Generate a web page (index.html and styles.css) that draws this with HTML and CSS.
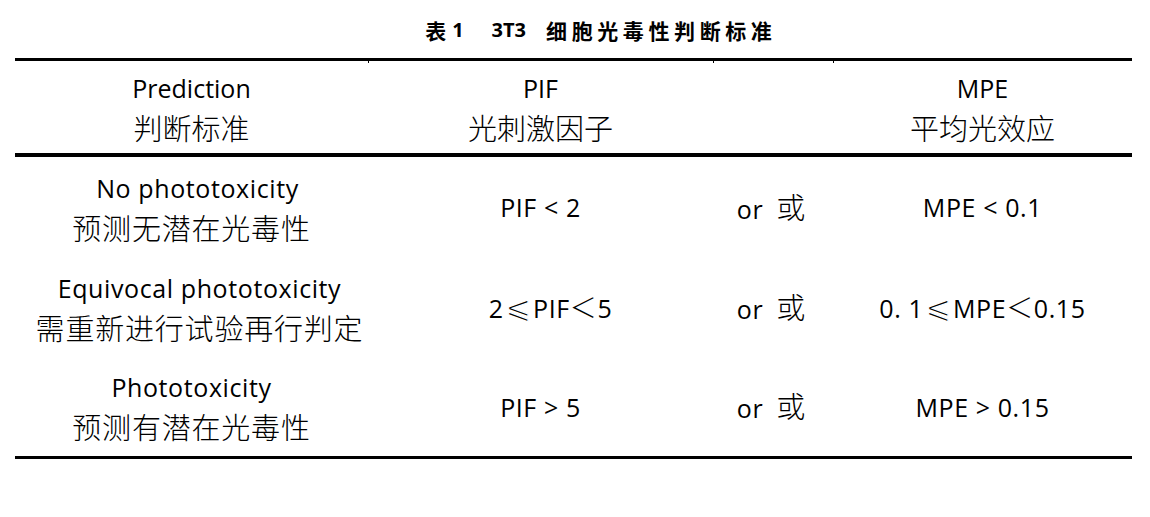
FILE: index.html
```html
<!DOCTYPE html>
<html lang="zh-CN">
<head>
<meta charset="utf-8">
<title>表1 3T3 细胞光毒性判断标准</title>
<link rel="stylesheet" href="styles.css">
</head>
<body>
<div class="page">
  <h1 class="caption"><span class="cap-no">表</span><span class="cap-num">1</span><span class="cap-code">3T3</span><span class="cap-text">细胞光毒性判断标准</span></h1>
  <table class="criteria">
    <colgroup>
      <col class="c1"><col class="c2"><col class="c3"><col class="c4">
    </colgroup>
    <thead>
      <tr>
        <th><span class="en">Prediction</span><span class="zh">判断标准</span></th>
        <th><span class="en">PIF</span><span class="zh">光刺激因子</span></th>
        <th></th>
        <th><span class="en">MPE</span><span class="zh">平均光效应</span></th>
      </tr>
    </thead>
    <tbody>
      <tr>
        <td><span class="en en-right">No phototoxicity</span><span class="zh">预测无潜在光毒性</span></td>
        <td><span class="en">PIF &lt; 2</span></td>
        <td class="or"><span class="en">or</span><span class="zh-or">或</span></td>
        <td><span class="en">MPE &lt; 0.1</span></td>
      </tr>
      <tr>
        <td class="nudge"><span class="en">Equivocal phototoxicity</span><span class="zh">需重新进行试验再行判定</span></td>
        <td class="shift"><span class="en">2<span class="sym">⩽</span>PIF<span class="sym-w">＜</span>5</span></td>
        <td class="or"><span class="en">or</span><span class="zh-or">或</span></td>
        <td><span class="en">0. 1<span class="sym">⩽</span>MPE<span class="sym-w">＜</span>0.15</span></td>
      </tr>
      <tr>
        <td><span class="en">Phototoxicity</span><span class="zh">预测有潜在光毒性</span></td>
        <td><span class="en">PIF &gt; 5</span></td>
        <td class="or"><span class="en">or</span><span class="zh-or">或</span></td>
        <td><span class="en">MPE &gt; 0.15</span></td>
      </tr>
    </tbody>
  </table>
</div>
</body>
</html>
```
FILE: styles.css
```css
html, body {
  margin: 0;
  padding: 0;
  background: #fff;
  color: #000;
}
.page {
  padding: 0 18px 0 15px;
  width: 1117px;
}
.caption {
  margin: 0;
  height: 58px;
  display: flex;
  align-items: center;
  justify-content: center;
  padding: 2px 0 0 50px;
  box-sizing: border-box;
  font-family: "Noto Sans CJK SC", sans-serif;
  font-weight: 700;
  font-size: 21px;
  line-height: 1;
}
.cap-no {
  margin-right: 6px;
}
.cap-num {
  font-family: "Open Sans", sans-serif;
  font-size: 20px;
  margin-right: 28px;
}
.cap-code {
  font-family: "Open Sans", sans-serif;
  font-size: 20px;
  margin-right: 20px;
}
.cap-text {
  letter-spacing: 4.6px;
  margin-right: -4.6px;
}
.criteria {
  width: 1117px;
  border-collapse: collapse;
  table-layout: fixed;
  font-family: "Open Sans", sans-serif;
  font-size: 25px;
}
.c1 { width: 353px; }
.c2 { width: 345px; }
.c3 { width: 120px; }
.c4 { width: 299px; }
.criteria thead tr {
  border-top: 3px solid #000;
  border-bottom: 4px solid #000;
}
.criteria th {
  height: 92px;
  padding: 0;
  font-weight: 400;
  text-align: center;
  vertical-align: middle;
}
.criteria th + th {
  background: linear-gradient(#000, #000) left top / 1px 2px no-repeat;
}
.criteria tbody tr:last-child {
  border-bottom: 3px solid #000;
}
.criteria td {
  height: 100px;
  padding: 0;
  text-align: center;
  vertical-align: middle;
}
.criteria tbody tr:last-child td {
  height: 99px;
}
.en {
  display: block;
  line-height: 34px;
}
.zh {
  display: block;
  margin-top: 5px;
  line-height: 34px;
  font-family: "Noto Sans CJK SC", sans-serif;
  font-weight: 300;
  font-size: 29px;
}
.criteria td .en {
  letter-spacing: 0.6px;
}
.criteria td .zh {
  letter-spacing: 0.8px;
}
.en-right {
  padding-left: 12px;
}
.or {
  padding-right: 4px !important;
}
.or .en {
  display: inline;
}
.zh-or {
  font-family: "Noto Sans CJK SC", sans-serif;
  font-weight: 300;
  font-size: 29px;
  margin-left: 13px;
  line-height: 34px;
}
.sym {
  font-family: "DejaVu Sans", sans-serif;
  font-size: 31px;
  font-weight: 400;
  line-height: 20px;
  margin: 0 1px 0 2px;
  -webkit-text-stroke: 1.2px #fff;
}
.sym-w {
  font-family: "Noto Sans CJK SC", sans-serif;
  font-weight: 300;
  font-size: 27px;
}
.shift {
  padding-left: 20px !important;
}
.nudge {
  padding-left: 16px !important;
}
```
